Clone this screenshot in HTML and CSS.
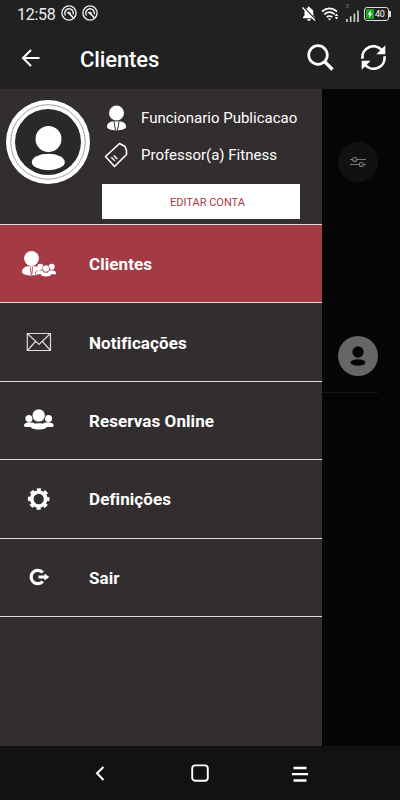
FILE: index.html
```html
<!DOCTYPE html>
<html lang="pt">
<head>
    <meta charset="UTF-8">
    <meta name="viewport" content="width=device-width, initial-scale=1.0">
    <title>Clientes</title>
    <link rel="stylesheet" href="styles.css">
</head>
<body>
    <header>
        <div class="status-bar">
            <span class="clock">12:58</span>
            <svg class="status-app" width="16" height="16" viewBox="0 0 16 16">
                <circle cx="8" cy="8" r="7.1" fill="none" stroke="#eee" stroke-width="1.4"/>
                <path d="M4.500 10.500A4.300 4.300 0 1 1 12.200 9.300" fill="none" stroke="#eee" stroke-width="1.500"/>
                <path d="M5.500 7.500l2-1 2 .8.500 2 3 3-1 1.200-3.500-3.500z" fill="#eee"/>
            </svg>
            <svg class="status-app" width="16" height="16" viewBox="0 0 16 16">
                <circle cx="8" cy="8" r="7.1" fill="none" stroke="#eee" stroke-width="1.4"/>
                <path d="M4.500 10.500A4.300 4.300 0 1 1 12.200 9.300" fill="none" stroke="#eee" stroke-width="1.500"/>
                <path d="M5.500 7.500l2-1 2 .8.500 2 3 3-1 1.200-3.500-3.500z" fill="#eee"/>
            </svg>
            <div class="status-right">
                <svg class="muted" width="14" height="16" viewBox="0 0 14 16">
                    <path d="M1 12.300V11l1.500-1.500V6.200C2.500 3.800 4 2.500 5.800 2V.8h2V2c2 .5 3.500 2 3.500 4.200v3.300l1.500 1.500v1.300zM5.300 13h3.400c0 1-.6 1.900-1.700 1.900S5.300 14 5.300 13z" fill="#fff"/>
                    <path d="M1.500 1l12 12.500" stroke="#212121" stroke-width="1.500"/>
                    <path d="M.5 1.500l12.500 13" stroke="#fff" stroke-width="1.300"/>
                </svg>
                <svg class="wifi" width="18" height="16" viewBox="0 0 18 16">
                    <path d="M1 5.500q7.500-6.200 15 0M3.300 8.300q5.200-4.200 10.400 0M5.700 11q2.800-2 5.600 0" fill="none" stroke="#fff" stroke-width="1.700"/>
                    <path d="M6.700 12.600h3.600L8.500 14.500zM15.500 7.500l1.800 2.600h-3.600zM13.700 11h3.600l-1.800 2.500z" fill="#fff"/>
                </svg>
                <div class="signal">
                    <span class="network">E</span>
                    <svg width="13" height="12" viewBox="0 0 13 12">
                        <path d="M1 9v3M4.700 6.300V12M8.400 3.600V12M12 .5V12" stroke="#ccc" stroke-width="1.700"/>
                    </svg>
                </div>
                <div class="battery">
                    <svg width="8" height="10" viewBox="0 0 8 10">
                        <rect width="8" height="10" fill="#11a51c"/>
                        <path d="M5 1L1.500 5.500h2L3 9l3.500-4.500h-2z" fill="#fff"/>
                    </svg>
                    <span>40</span>
                </div>
            </div>
        </div>
        <div class="toolbar">
            <svg class="back" width="20" height="20" viewBox="0 0 20 20">
                <path d="M18.500 10H2M10 2L2 10l8 8" fill="none" stroke="#fff" stroke-width="2.100"/>
            </svg>
            <h1>Clientes</h1>
            <svg class="search" width="27" height="27" viewBox="0 0 27 27">
                <circle cx="11" cy="11" r="9.300" fill="none" stroke="#fff" stroke-width="2.700"/>
                <path d="M17.500 17.500L25.500 25.500" stroke="#fff" stroke-width="3.200"/>
            </svg>
            <svg width="27" height="27" viewBox="0 0 27 27">
                <path d="M2.500 14.800A11 11 0 0 1 21.800 6.200M24.500 12.200A11 11 0 0 1 5.200 20.800" fill="none" stroke="#fff" stroke-width="2.700"/>
                <path d="M25.300 1.300v8.900h-8.900zM1.700 25.700v-8.900h8.900z" fill="#fff"/>
            </svg>
        </div>
    </header>

    <main>
        <aside class="drawer">
            <section class="profile">
                <svg class="avatar" width="84" height="84" viewBox="0 0 84 84">
                    <circle cx="42" cy="42" r="42" fill="#fff"/>
                    <circle cx="42" cy="42" r="37.300" fill="none" stroke="#777" stroke-width=".7"/>
                    <circle cx="42" cy="42" r="33" fill="#2b2829"/>
                    <circle cx="42.500" cy="39" r="13" fill="#fff"/>
                    <ellipse cx="42.300" cy="62" rx="16.500" ry="8.200" fill="#fff"/>
                </svg>
                <div class="details">
                    <div class="detail">
                        <svg width="24" height="26" viewBox="0 0 24 26">
                            <ellipse cx="12.500" cy="8" rx="7.500" ry="7.500" fill="#fff"/>
                            <path d="M3 21.500c0-3.500 3-5 6.500-5h6c3.500 0 6.500 1.500 6.500 5 0 2.500-3.500 3.800-9.500 3.800S3 24 3 21.500z" fill="#fff"/>
                            <path d="M10 17l1.500 8M15 17l-1.500 8" stroke="#322e2f" stroke-width="1"/>
                        </svg>
                        <span>Funcionario Publicacao</span>
                    </div>
                    <div class="detail">
                        <svg width="24" height="26" viewBox="0 0 24 26">
                            <path d="M1.500 14.500L15.500 1.500l5.500 3 1.500 4v4L10.500 24.500z" fill="none" stroke="#fff" stroke-width="1.600" stroke-linejoin="round"/>
                            <path d="M9.800 13.500l3.500 3.500M7.300 15.200l3.500 3.500" stroke="#fff" stroke-width="1.400"/>
                        </svg>
                        <span>Professor(a) Fitness</span>
                    </div>
                    <button type="button">EDITAR CONTA</button>
                </div>
            </section>

            <nav class="menu">
                <a class="menu-item active">
                    <svg width="36" height="28" viewBox="0 0 36 28">
                        <g fill="#fff">
                            <circle cx="9.500" cy="8.500" r="7.400"/>
                            <path d="M0 21.700c0-3.700 3.500-5.500 7-5.500h5c3.500 0 6 2 6 5 0 2.500-3.500 4.200-8.500 4.200S0 24.200 0 21.700z"/>
                            <circle cx="18.300" cy="16.800" r="3"/>
                            <circle cx="29.700" cy="16.800" r="3"/>
                            <path d="M14 23c0-3.500 8-3.500 8-.5v1.800h-8zM26 22.500c0-3 8-3 8 .5v1.300h-8z"/>
                        </g>
                        <path d="M8.300 17l.9 8M10.700 17l-.9 8M13.500 24.500v-2.500l2-1.800" fill="none" stroke="#a43b44" stroke-width=".8"/>
                        <circle cx="24" cy="18.500" r="3.600" fill="#fff" stroke="#a43b44" stroke-width=".6"/>
                        <ellipse cx="24" cy="24.500" rx="5" ry="1.900" fill="#fff"/>
                    </svg>
                    <span>Clientes</span>
                </a>
                <a class="menu-item">
                    <svg width="36" height="28" viewBox="0 0 36 28">
                        <path d="M5.300 5.500h23.200v17H5.300zM5.300 5.500L17 16.500 28.500 5.500M5.500 22.500l8-9M28.500 22.500l-8-9" fill="none" stroke="#ddd" stroke-width="1.200"/>
                    </svg>
                    <span>Notificações</span>
                </a>
                <a class="menu-item">
                    <svg width="36" height="28" viewBox="0 0 36 28">
                        <g fill="#fff">
                            <circle cx="7" cy="12.500" r="3.600"/>
                            <circle cx="26.500" cy="12.500" r="3.600"/>
                            <path d="M2 19.500c0-4 11-4 11-1V21H5c-2 0-3-.5-3-1.500zM31.700 19.500c0-4-11-4-11-1V21h8c2 0 3-.5 3-1.500z"/>
                            <circle cx="16.700" cy="9.500" r="6.600" stroke="#322e2f" stroke-width=".8"/>
                            <path d="M8.500 20.500c0-4.500 16.500-4.500 16.500 0 0 4-16.500 4-16.500 0z"/>
                        </g>
                    </svg>
                    <span>Reservas Online</span>
                </a>
                <a class="menu-item">
                    <svg width="36" height="28" viewBox="0 0 36 28">
                        <circle cx="16.700" cy="14" r="7" fill="none" stroke="#fff" stroke-width="3.700"/>
                        <circle cx="16.700" cy="14" r="9.400" fill="none" stroke="#fff" stroke-width="2.800" stroke-dasharray="4.200 3.183" stroke-dashoffset="2.100"/>
                    </svg>
                    <span>Definições</span>
                </a>
                <a class="menu-item">
                    <svg width="36" height="28" viewBox="0 0 36 28">
                        <path d="M20.800 9.500A6.700 6.700 0 1 0 20.800 18.500" fill="none" stroke="#fff" stroke-width="3.200"/>
                        <path d="M16.500 12.400h6v-2l4.800 3.600-4.800 3.600v-2h-6z" fill="#fff"/>
                    </svg>
                    <span>Sair</span>
                </a>
            </nav>
        </aside>

        <div class="backdrop">
            <svg class="filter" width="40" height="40" viewBox="0 0 40 40">
                <circle cx="20" cy="20" r="20" fill="#111"/>
                <g fill="none" stroke="#777" stroke-width="1.200">
                    <path d="M12 17.500h2.500M19 17.500h9M12 22.500h9M25.500 22.500H28"/>
                    <circle cx="16.700" cy="17.500" r="2"/>
                    <circle cx="23.300" cy="22.500" r="2"/>
                </g>
            </svg>
            <svg class="client" width="40" height="40" viewBox="0 0 40 40">
                <circle cx="20" cy="20" r="20" fill="#666"/>
                <circle cx="20" cy="16" r="5.700" fill="#050505"/>
                <ellipse cx="20" cy="26.500" rx="7.500" ry="3.300" fill="#050505"/>
            </svg>
            <div class="divider"></div>
        </div>
    </main>

    <footer>
        <svg width="20" height="20" viewBox="0 0 20 20">
            <path d="M13.500 4L7 10.300l6.500 6.700" fill="none" stroke="#fff" stroke-width="2"/>
        </svg>
        <svg width="20" height="20" viewBox="0 0 20 20">
            <rect x="2.200" y="2.400" width="15.600" height="15.400" rx="3" fill="none" stroke="#fff" stroke-width="1.900"/>
        </svg>
        <svg width="20" height="20" viewBox="0 0 20 20">
            <path d="M3.500 5h13M2 11.200h16M3.500 17.500h13" stroke="#fff" stroke-width="2.300"/>
        </svg>
    </footer>
</body>
</html>
```
FILE: styles.css
```css
* {
    box-sizing: border-box;
}
body {
    margin: 0;
    height: 800px;
    display: flex;
    flex-direction: column;
    background-color: #050505;
    color: #fff;
    font-family: Roboto, sans-serif;
    overflow: hidden;
}
svg {
    display: block;
    flex-shrink: 0;
}

/* Status bar and toolbar */
header {
    height: 89px;
    background-color: #212121;
}
.status-bar {
    height: 28px;
    padding: 0 11px 0 17px;
    display: flex;
    align-items: center;
}
.clock {
    width: 44px;
    font-size: 16px;
    letter-spacing: -0.3px;
    color: #eee;
}
.status-app {
    margin: 0 5px 2px 0;
}
.status-right {
    margin-left: auto;
    display: flex;
    align-items: center;
}
.muted,
.wifi,
.battery {
    margin-bottom: 1px;
}
.muted {
    margin-right: -1px;
}
.wifi {
    margin-left: 6px;
}
.signal {
    height: 20px;
    margin: 0 5px 3px 7px;
    display: flex;
    flex-direction: column;
}
.network {
    height: 7px;
    font-size: 6px;
    line-height: 6px;
    color: #666;
}
.battery {
    position: relative;
    width: 25px;
    height: 14px;
    display: flex;
    align-items: center;
    gap: 1px;
    padding-left: 1px;
    border: 1px solid #ddd;
    border-radius: 3px;
    font-size: 9px;
    letter-spacing: -0.2px;
}
.battery::after {
    content: "";
    position: absolute;
    right: -3px;
    top: 3px;
    width: 2px;
    height: 6px;
    background-color: #ddd;
}
.toolbar {
    height: 61px;
    padding: 0 13px 0 21px;
    display: flex;
    align-items: center;
}
.toolbar svg {
    margin-bottom: 2px;
}
.toolbar .back {
    margin-right: 39px;
}
h1 {
    margin: 1px auto 0 0;
    font-size: 22px;
    font-weight: 500;
    letter-spacing: -0.1px;
}
.toolbar .search {
    margin-right: 26px;
}

main {
    height: 657px;
    display: flex;
}
.drawer {
    width: 322px;
    background-color: #322e2f;
}

/* Account summary */
.profile {
    height: 135px;
    padding: 11px 0 0 6px;
    display: flex;
}
.details {
    margin-left: 12px;
    padding-top: 5px;
}
.detail {
    height: 26px;
    margin: 0 0 11px 2px;
    display: flex;
    align-items: center;
    gap: 13px;
    font-size: 15px;
    white-space: nowrap;
}
button {
    display: block;
    width: 198px;
    height: 35px;
    margin-top: 16px;
    padding: 2px 0 0 13px;
    border: 0;
    background-color: #fff;
    color: #a43b44;
    font-family: inherit;
    font-size: 11px;
}

/* Drawer menu */
.menu {
    border-top: 1px solid #ddd;
}
.menu-item {
    height: 78.4px;
    padding-left: 22px;
    display: flex;
    align-items: center;
    gap: 31px;
    border-bottom: 1px solid #ddd;
    font-size: 17px;
    font-weight: 700;
    letter-spacing: 0.08px;
}
.menu-item span {
    padding-top: 1px;
}
.menu-item.active {
    background-color: #a43b44;
}

/* Dimmed page behind the drawer */
.backdrop {
    flex: 1;
    padding-top: 53px;
}
.filter,
.client {
    margin-left: 16px;
}
.client {
    margin-top: 154px;
}
.divider {
    width: 56px;
    height: 1px;
    margin-top: 16px;
    background-color: #171717;
}

/* System navigation */
footer {
    height: 54px;
    display: flex;
    align-items: center;
    justify-content: center;
    gap: 80px;
    background-color: #121212;
}
```
